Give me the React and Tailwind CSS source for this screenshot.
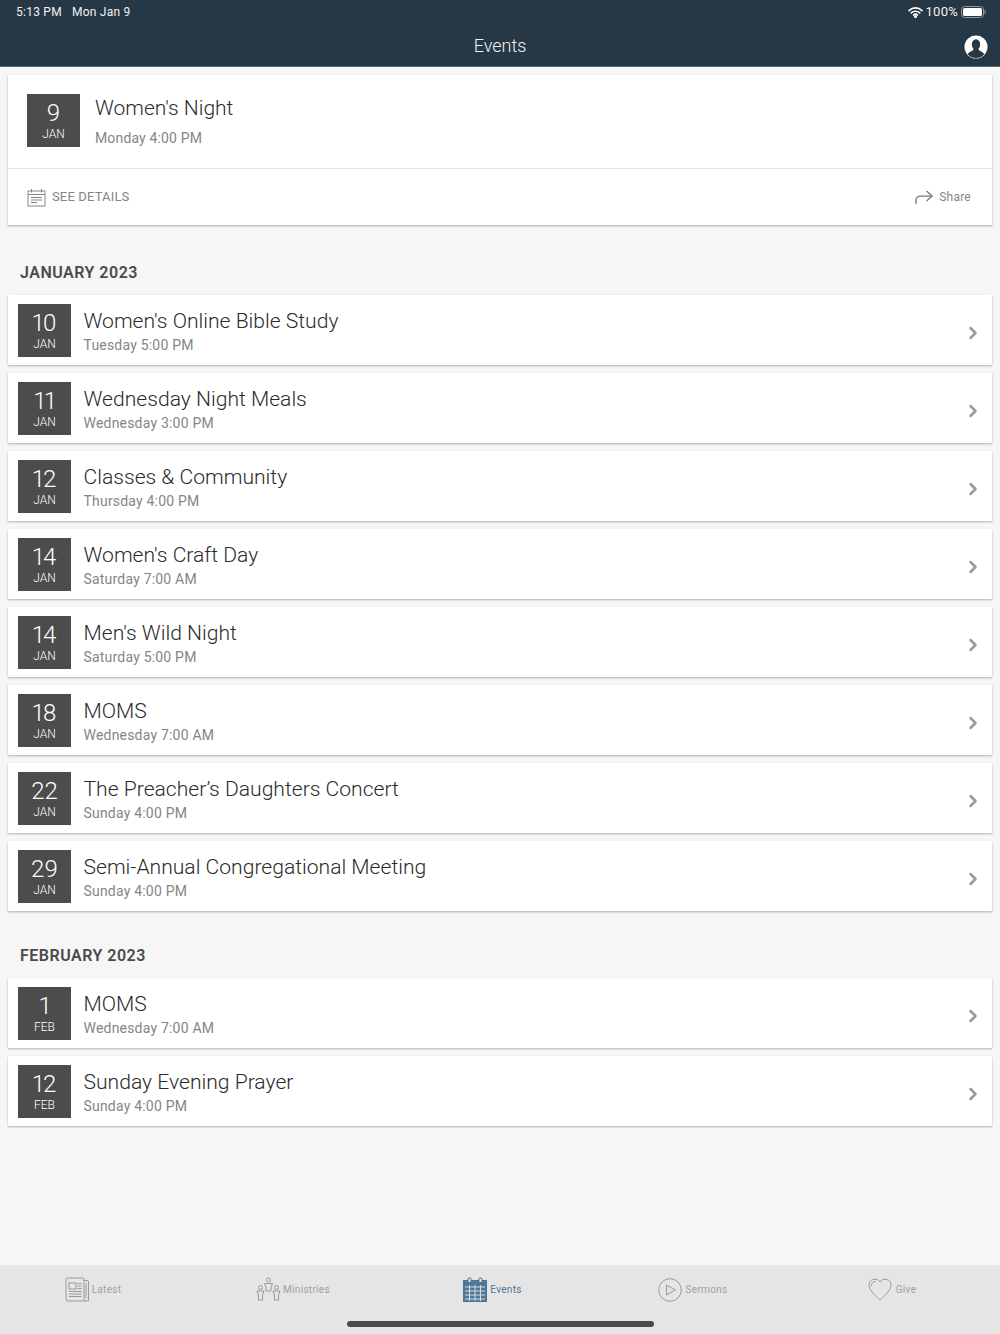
import { ChevronRight } from 'lucide-react'

const january = [
  { day: '10', mon: 'JAN', title: "Women's Online Bible Study", when: 'Tuesday 5:00 PM' },
  { day: '11', mon: 'JAN', title: 'Wednesday Night Meals', when: 'Wednesday 3:00 PM' },
  { day: '12', mon: 'JAN', title: 'Classes & Community', when: 'Thursday 4:00 PM' },
  { day: '14', mon: 'JAN', title: "Women's Craft Day", when: 'Saturday 7:00 AM' },
  { day: '14', mon: 'JAN', title: "Men's Wild Night", when: 'Saturday 5:00 PM' },
  { day: '18', mon: 'JAN', title: 'MOMS', when: 'Wednesday 7:00 AM' },
  { day: '22', mon: 'JAN', title: 'The Preacher’s Daughters Concert', when: 'Sunday 4:00 PM' },
  { day: '29', mon: 'JAN', title: 'Semi-Annual Congregational Meeting', when: 'Sunday 4:00 PM' },
]

const february = [
  { day: '1', mon: 'FEB', title: 'MOMS', when: 'Wednesday 7:00 AM' },
  { day: '12', mon: 'FEB', title: 'Sunday Evening Prayer', when: 'Sunday 4:00 PM' },
]

function DateBox({ day, mon }) {
  return (
    <div className="w-[53px] h-[53px] shrink-0 bg-[#4c4c4c] text-white flex flex-col items-center">
      <span className="text-[24px] leading-[28px] mt-[5px] font-light [font-variant-numeric:proportional-nums]">{day}</span>
      <span className="text-[12px] leading-[14px] font-light">{mon}</span>
    </div>
  )
}

function EventRow({ ev }) {
  return (
    <div className="h-[70px] mb-[8px] bg-white flex items-center pt-[1px] pl-[10px] pr-[9px] shadow-[0_1px_2px_rgba(0,0,0,0.28)]">
      <DateBox day={ev.day} mon={ev.mon} />
      <div className="ml-[12.5px] flex-1">
        <p className="text-[21.1px] leading-[28px] font-light text-[#2b2b2b]">{ev.title}</p>
        <p className="text-[14px] leading-[18px] mt-[1px] text-[#858585] tracking-[0.2px]">{ev.when}</p>
      </div>
      <ChevronRight size={20} strokeWidth={3} className="text-[#9a9a9a] mt-[5px]" />
    </div>
  )
}

function Heading({ children, className }) {
  return <h2 className={`px-[12px] text-[16px] leading-[20px] font-semibold text-[#4a4a4a] tracking-[0.5px] ${className}`}>{children}</h2>
}

function TabLabel({ active, children }) {
  return <span className={`text-[10px] tracking-[0.3px] ${active ? 'text-[#4f7796]' : 'text-[#a0a0a0]'}`}>{children}</span>
}

export default function App() {
  return (
    <div className="w-[1000px] h-[1334px] bg-[#f6f6f6] flex flex-col overflow-hidden font-['Roboto',sans-serif]">
      {/* status bar + nav */}
      <header className="h-[67px] shrink-0 bg-[#263746] text-white border-b border-[#5a6873]">
        <div className="h-[24px] flex items-center justify-between pl-[16px] pr-[14px] text-[12px] tracking-[0.25px]">
          <div className="flex gap-[10px] text-[#f2f2f2]">
            <span>5:13 PM</span>
            <span>Mon Jan 9</span>
          </div>
          <div className="flex items-center gap-[3px] text-[#f2f2f2]">
            <svg width="15" height="11" viewBox="0 0 15 11" fill="none" stroke="white" strokeWidth="1.6" strokeLinecap="round">
              <path d="M1 3.6a9.2 9.2 0 0 1 13 0" />
              <path d="M3.3 5.9a6 6 0 0 1 8.4 0" />
              <path d="M5.5 8a3 3 0 0 1 4 0" />
              <circle cx="7.5" cy="9.6" r="0.7" fill="white" />
            </svg>
            <span className="text-[13px]">100%</span>
            <svg width="25" height="12" viewBox="0 0 25 12">
              <rect x="0.5" y="0.5" width="22" height="11" rx="3" fill="none" stroke="#8a97a1" />
              <rect x="2" y="2" width="19" height="8" rx="1.6" fill="white" />
              <rect x="23.5" y="4" width="1.2" height="4" rx="0.6" fill="#8a97a1" />
            </svg>
          </div>
        </div>
        <div className="h-[42px] relative flex items-center justify-center">
          <span className="text-[18px] font-light text-[#f2f2f2]">Events</span>
          <svg width="24" height="24" viewBox="0 0 24 24" className="absolute left-[964px] top-[11px]">
            <circle cx="12" cy="12" r="11.5" fill="white" />
            <ellipse cx="12" cy="9.5" rx="4.2" ry="5.2" fill="#263746" />
            <path d="M3.8 19.5c1-3.2 5-3.2 6-5.5h4.4c1 2.3 5 2.3 6 5.5A11 11 0 0 1 12 23a11 11 0 0 1-8.2-3.5z" fill="#263746" />
          </svg>
        </div>
      </header>

      <main className="flex-1 px-[8px] pt-[8px]">
        {/* next event */}
        <section className="h-[150px] bg-white shadow-[0_1px_2px_rgba(0,0,0,0.3)]">
          <div className="h-[94px] border-b border-[#e4e4e4] flex pl-[19px] pt-[19px]">
            <DateBox day="9" mon="JAN" />
            <div className="ml-[15px]">
              <p className="text-[21px] leading-[28px] font-light text-[#2b2b2b]">Women's Night</p>
              <p className="text-[14px] leading-[18px] mt-[7px] text-[#858585] tracking-[0.15px]">Monday 4:00 PM</p>
            </div>
          </div>
          <div className="h-[56px] flex items-center justify-between pl-[19px] pr-[21px]">
            <div className="flex items-center gap-[6px]">
              <svg width="19" height="19" viewBox="0 0 19 19" fill="none" stroke="#858585" strokeWidth="1">
                <rect x="1" y="3" width="17" height="15" />
                <path d="M1 6.5h17M4.5 1v3.5M14.500 1v3.500M4 9.500h11M4 12h11M4 14.500h6" />
              </svg>
              <span className="text-[13px] text-[#858585] tracking-[0.15px]">SEE DETAILS</span>
            </div>
            <div className="flex items-center gap-[6px]">
              <svg width="18" height="15" viewBox="0 0 19 15" fill="none" stroke="#777" strokeWidth="1.4" strokeLinecap="round" strokeLinejoin="round">
                <path d="M1 14V10.500C1 7.500 3 6 6 6h12" />
                <path d="M12.500 1L18 6l-5.500 5" />
              </svg>
              <span className="text-[12px] text-[#858585] tracking-[0.25px]">Share</span>
            </div>
          </div>
        </section>

        <Heading className="mt-[38px] mb-[12px]">JANUARY 2023</Heading>
        {january.map((ev, i) => <EventRow key={i} ev={ev} />)}

        <Heading className="mt-[35px] mb-[12px]">FEBRUARY 2023</Heading>
        {february.map((ev, i) => <EventRow key={i} ev={ev} />)}
      </main>

      {/* tab bar */}
      <nav className="h-[69px] shrink-0 bg-[#e5e5e5] relative">
        <div className="grid grid-cols-5 h-[49px]">
          <div className="flex items-center justify-center gap-[2px] pr-[14px]">
            <svg width="25" height="25" viewBox="0 0 25 25" fill="none" stroke="#9a9a9a" strokeWidth="1">
              <path d="M19 3.5h3a1.5 1.5 0 0 1 1.5 1.5v18a1 1 0 0 1-1 1H3a2 2 0 0 1-2-2V2.500A1.500 1.500 0 0 1 2.500 1H18a1 1 0 0 1 1 1v20a2 2 0 0 0 1.500 2" />
              <rect x="4" y="6" width="7" height="6" />
              <path d="M12.500 6.500h4M12.500 9h4M12.500 11.500h4M4 14.500h12.500M4 17h12.500M4 19.500h12.500M21 6v15" />
            </svg>
            <TabLabel>Latest</TabLabel>
          </div>
          <div className="flex items-center justify-center gap-[2px] pr-[14px]">
            <svg width="25" height="25" viewBox="0 0 25 25" fill="none" stroke="#9a9a9a" strokeWidth="1">
              <circle cx="12.500" cy="3" r="2" />
              <path d="M8.500 6.500h8l-1.500 4v3.500h-5v-3.500z" />
              <circle cx="4.500" cy="10.500" r="2" />
              <path d="M1 14h7l-1.500 4v5h-4v-5z" />
              <circle cx="20.500" cy="10.500" r="2" />
              <path d="M17 14h7l-1.500 4v5h-4v-5z" />
            </svg>
            <TabLabel>Ministries</TabLabel>
          </div>
          <div className="flex items-center justify-center gap-[3px] pr-[15px]">
            <svg width="24" height="25" viewBox="0 0 24 25">
              <path d="M0 3h24v22H0z" fill="#4f7796" />
              <rect x="5" y="1" width="3" height="4.500" rx="1" fill="#e5e5e5" stroke="#4f7796" />
              <rect x="16" y="1" width="3" height="4.500" rx="1" fill="#e5e5e5" stroke="#4f7796" />
              <path d="M2 10h20M2 14h20M2 18h20M2 22h20M6.500 8v16M12 8v16M17.500 8v16" stroke="#e5e5e5" strokeWidth="0.9" />
            </svg>
            <TabLabel active>Events</TabLabel>
          </div>
          <div className="flex items-center justify-center gap-[4px] pr-[15px]">
            <svg width="24" height="24" viewBox="0 0 24 24" fill="none" stroke="#9a9a9a" strokeWidth="1">
              <circle cx="12" cy="12" r="11.300" />
              <path d="M8.500 7l9 5-9 5z" />
            </svg>
            <TabLabel>Sermons</TabLabel>
          </div>
          <div className="flex items-center justify-center gap-[4px] pr-[16px]">
            <svg width="24" height="23" viewBox="0 0 24 23" fill="none" stroke="#9a9a9a" strokeWidth="1">
              <path d="M12 22C8 18 1 13 1 7a6 6 0 0 1 11-3.200A6 6 0 0 1 23 7c0 6-7 11-11 15z" />
              <path d="M3.500 8a4 4 0 0 1 4-4.500" />
            </svg>
            <TabLabel>Give</TabLabel>
          </div>
        </div>
        <div className="absolute left-[347px] top-[56px] w-[307px] h-[6px] rounded-full bg-[#4a4a4a]" />
      </nav>
    </div>
  )
}
